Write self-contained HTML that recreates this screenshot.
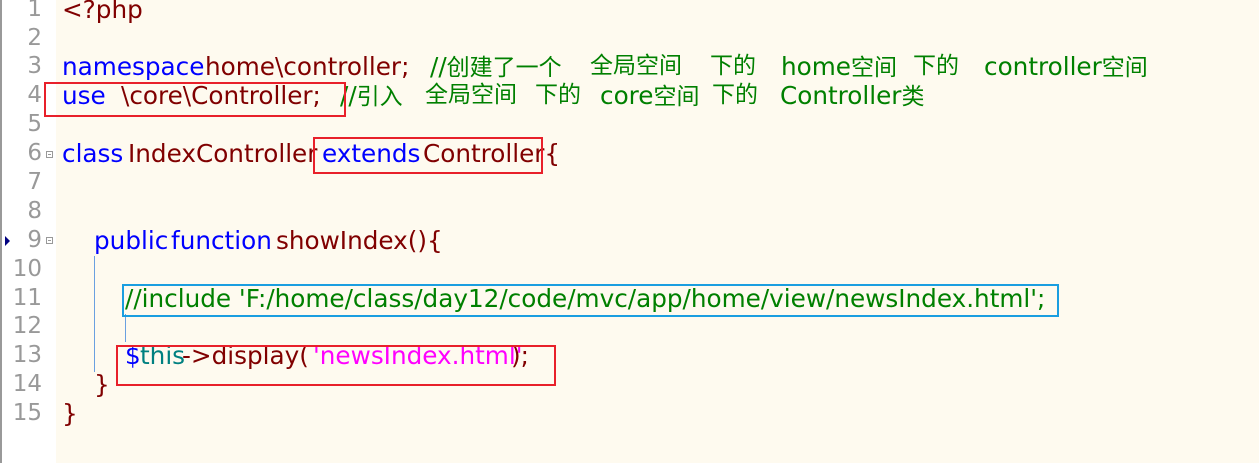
<!DOCTYPE html>
<html><head><meta charset="utf-8"><style>
body{margin:0;width:1259px;height:463px;overflow:hidden;background:#fff;position:relative;font-family:"DejaVu Sans","Noto Sans CJK SC",sans-serif;font-size:24.7px}
#code{position:absolute;left:56px;top:0;width:1203px;height:463px;background:#fefaef}
#bd{position:absolute;left:0;top:0;width:2px;height:463px;background:#999}
.s{position:absolute;white-space:pre;line-height:29px;height:29px;margin-top:-2px}
.c{font-size:23px}
.n{color:#999;text-align:right;width:42px;left:0;font-size:23px}
.b{color:#0000ff}.r{color:#800000}.g{color:#008000}.t{color:#008080}.m{color:#ff00ff}
.box{position:absolute;border:2px solid #e8202a;box-sizing:border-box}
.fold{position:absolute;left:46px;width:7px;height:7px;border:1px solid #999;box-sizing:border-box}
.fold:after{content:"";position:absolute;left:1px;top:2px;width:3px;height:1px;background:#999}
.vl{position:absolute;width:1px;background:#6aa0e0}
</style></head><body>
<div id="bd"></div><div id="code"></div>
<div class="s n" style="top:-3px">1</div>
<div class="s n" style="top:26px">2</div>
<div class="s n" style="top:54px">3</div>
<div class="s n" style="top:83px">4</div>
<div class="s n" style="top:112px">5</div>
<div class="s n" style="top:141px">6</div>
<div class="s n" style="top:170px">7</div>
<div class="s n" style="top:199px">8</div>
<div class="s n" style="top:228px">9</div>
<div class="s n" style="top:257px">10</div>
<div class="s n" style="top:286px">11</div>
<div class="s n" style="top:314px">12</div>
<div class="s n" style="top:343px">13</div>
<div class="s n" style="top:372px">14</div>
<div class="s n" style="top:401px">15</div>
<div class="fold" style="top:151px"></div>
<div class="fold" style="top:237px"></div>
<div style="position:absolute;left:5px;top:236px;width:0;height:0;border-top:5px solid transparent;border-bottom:5px solid transparent;border-left:5px solid #000080"></div>
<div class="vl" style="left:94px;top:256px;height:116px"></div>
<div class="vl" style="left:125px;top:314px;height:28px"></div>

<div class="s r" style="left:62px;top:-3px">&lt;?php</div>
<div class="s b" style="left:62px;top:54px">namespace</div>
<div class="s r" style="left:205px;top:54px">home\controller;</div>
<div class="s g" style="left:430px;top:54px">//<span class="c">创建了一个</span></div>
<div class="s g c" style="left:590px;top:54px">全局空间</div>
<div class="s g c" style="left:710px;top:54px">下的</div>
<div class="s g" style="left:781px;top:54px">home<span class="c">空间</span></div>
<div class="s g c" style="left:913px;top:54px">下的</div>
<div class="s g" style="left:984px;top:54px">controller<span class="c">空间</span></div>

<div class="s b" style="left:62px;top:83px">use</div>
<div class="s r" style="left:121px;top:83px">\core\Controller;</div>
<div class="s g" style="left:340px;top:83px">//<span class="c">引入</span></div>
<div class="s g c" style="left:425px;top:83px">全局空间</div>
<div class="s g c" style="left:535px;top:83px">下的</div>
<div class="s g" style="left:600px;top:83px">core<span class="c">空间</span></div>
<div class="s g c" style="left:712px;top:83px">下的</div>
<div class="s g" style="left:780px;top:83px">Controller<span class="c">类</span></div>

<div class="s b" style="left:62px;top:141px">class</div>
<div class="s r" style="left:128px;top:141px">IndexController</div>
<div class="s b" style="left:322px;top:141px">extends</div>
<div class="s r" style="left:423px;top:141px">Controller{</div>

<div class="s b" style="left:94px;top:228px">public</div>
<div class="s b" style="left:171px;top:228px">function</div>
<div class="s r" style="left:276px;top:228px">showIndex(){</div>

<div class="s g" style="left:125px;top:286px">//include 'F:/home/class/day12/code/mvc/app/home/view/newsIndex.html';</div>

<div class="s b" style="left:125px;top:343px">$</div>
<div class="s t" style="left:140px;top:343px">this</div>
<div class="s r" style="left:182px;top:343px">-&gt;display(</div>
<div class="s m" style="left:313px;top:343px">'newsIndex.html'</div>
<div class="s r" style="left:511px;top:343px">);</div>
<div class="s r" style="left:94px;top:372px">}</div>
<div class="s r" style="left:62px;top:401px">}</div>

<div class="box" style="left:44px;top:82px;width:302px;height:35px"></div>
<div class="box" style="left:313px;top:137px;width:230px;height:37px"></div>
<div class="box" style="left:122px;top:284px;width:937px;height:33px;border-color:#1a9ee0"></div>
<div class="box" style="left:116px;top:345px;width:440px;height:41px"></div>
</body></html>
